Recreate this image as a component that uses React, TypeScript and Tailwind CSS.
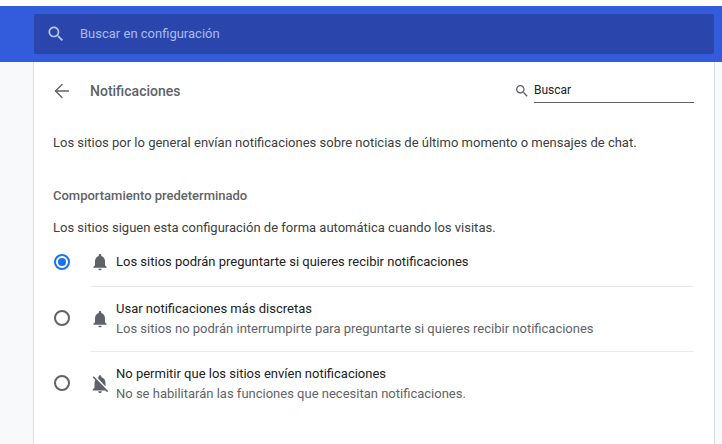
import { ArrowLeft } from 'lucide-react';

function SearchIcon({ className }: { className: string }) {
  return (
    <svg viewBox="0 0 24 24" className={className}>
      <path d="M15.5 14h-.79l-.28-.27C15.41 12.59 16 11.11 16 9.5 16 5.91 13.09 3 9.5 3S3 5.91 3 9.5 5.91 16 9.5 16c1.61 0 3.09-.59 4.23-1.57l.27.28v.79l5 4.99L20.49 19l-4.99-5zm-6 0C7.01 14 5 11.99 5 9.5S7.01 5 9.5 5 14 7.01 14 9.5 11.99 14 9.5 14z" />
    </svg>
  );
}

// Material bell icons, same paths Chrome settings uses
function Bell() {
  return (
    <svg viewBox="0 0 24 24" className="w-[20px] h-[20px] shrink-0 fill-[#5f6368]">
      <path d="M12 22c1.1 0 2-.9 2-2h-4c0 1.1.9 2 2 2zm6-6v-5c0-3.07-1.63-5.64-4.5-6.32V4c0-.83-.67-1.5-1.5-1.5s-1.5.67-1.5 1.5v.68C7.64 5.36 6 7.92 6 11v5l-2 2v1h16v-1l-2-2z" />
    </svg>
  );
}

function BellOff() {
  return (
    <svg viewBox="0 0 24 24" className="w-[22px] h-[22px] shrink-0 fill-[#5f6368]">
      <path d="M20 18.69L7.84 6.14 5.27 3.49 4 4.76l2.8 2.8v.01c-.52.99-.8 2.16-.8 3.42v5l-2 2v1h13.73l2 2L21 19.72l-1-1.03zM12 22c1.11 0 2-.89 2-2h-4c0 1.11.89 2 2 2zm6-7.32V11c0-3.08-1.64-5.64-4.5-6.32V4c0-.83-.67-1.5-1.5-1.5s-1.5.67-1.5 1.5v.68c-.15.03-.29.08-.42.12-.1.03-.2.07-.3.11h-.01c-.2.08-.4.17-.59.27-.01 0-.01 0-.02.01L18 14.68z" />
    </svg>
  );
}

function Radio({ checked }: { checked?: boolean }) {
  return (
    <div className={`w-4 h-4 rounded-full border-2 flex items-center justify-center shrink-0 ${checked ? 'border-[#1a73e8]' : 'border-[#5f6368]'}`}>
      {checked && <div className="w-2 h-2 rounded-full bg-[#1a73e8]" />}
    </div>
  );
}

const OPTIONS = [
  { title: 'Usar notificaciones más discretas', sub: 'Los sitios no podrán interrumpirte para preguntarte si quieres recibir notificaciones', off: false },
  { title: 'No permitir que los sitios envíen notificaciones', sub: 'No se habilitarán las funciones que necesitan notificaciones.', off: true },
];

export default function App() {
  return (
    <div className="w-[722px] h-[444px] overflow-hidden bg-[#f8f9fa] font-['Roboto',sans-serif] text-[13px]">
      <div className="h-[6px] bg-white" />
      {/* Top bar */}
      <header className="h-[56px] bg-[#325cdb] pl-[34px] pr-[8px] pt-[8px]">
        <div className="h-[40px] rounded-[2px] bg-[#2a46ad] flex items-center pl-[12px] gap-[14px] text-[#a9bcee]">
          <SearchIcon className="w-[20px] h-[20px] fill-[#b9c8f1]" />
          <span>Buscar en configuración</span>
        </div>
      </header>

      <main className="ml-[33px] mr-[7px] h-[382px] bg-white border-l border-r border-[#dadce0] px-[20px]">
        <div className="h-[58px] flex items-center">
          <ArrowLeft className="-ml-[3px] w-[22px] h-[22px] text-[#5f6368]" strokeWidth={1.5} />
          <h1 className="ml-[17px] text-[#5f6368] font-medium text-[14px]">Notificaciones</h1>
          <div className="ml-auto w-[180px] flex items-center">
            <SearchIcon className="w-[16px] h-[16px] fill-[#5f6368]" />
            <span className="ml-[4px] flex-1 h-[24px] leading-[23px] border-b border-[#5f6368] text-[#202124] text-[12px]">Buscar</span>
          </div>
        </div>

        <p className="-ml-[1px] mt-[13px] text-[#3c4043]">Los sitios por lo general envían notificaciones sobre noticias de último momento o mensajes de chat.</p>
        <h2 className="-ml-[1px] mt-[33px] text-[#5f6368] font-medium">Comportamiento predeterminado</h2>
        <p className="-ml-[1px] mt-[13px] text-[#3c4043]">Los sitios siguen esta configuración de forma automática cuando los visitas.</p>

        <div className="mt-[3px]">
          <div className="h-[45px] pb-[2px] flex items-center">
            <Radio checked />
            <div className="ml-[20px] w-[20px] flex justify-center"><Bell /></div>
            <span className="ml-[6px] text-[#202124]">Los sitios podrán preguntarte si quieres recibir notificaciones</span>
          </div>
          {OPTIONS.map((o) => (
            <div key={o.title} className="flex items-center h-[65px]">
              <Radio />
              <div className="ml-[20px] flex-1 h-full border-t border-[#e8eaed] flex items-center">
                <div className="w-[20px] flex justify-center">{o.off ? <BellOff /> : <Bell />}</div>
                <div className="ml-[6px] leading-[20px]">
                  <div className="text-[#202124]">{o.title}</div>
                  <div className="text-[#5f6368]">{o.sub}</div>
                </div>
              </div>
            </div>
          ))}
        </div>
      </main>
    </div>
  );
}
